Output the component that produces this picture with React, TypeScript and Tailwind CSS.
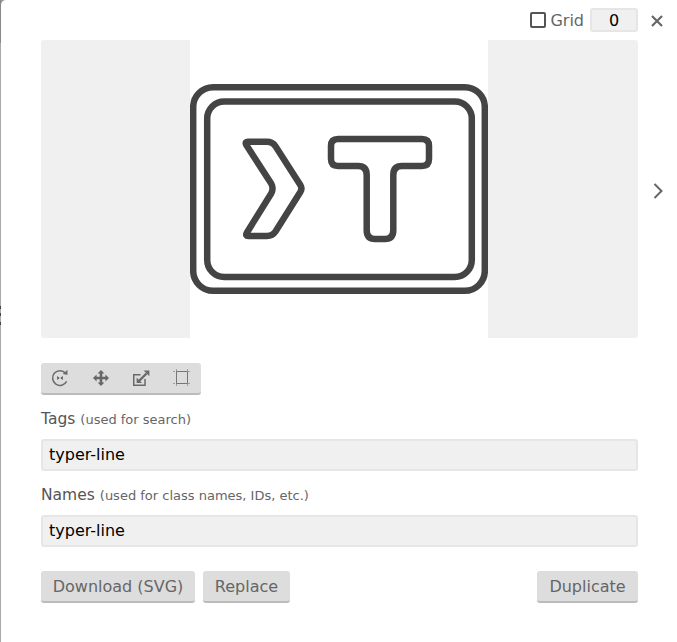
const RotateIcon = () => (
  <svg width="20" height="20" viewBox="0 0 20 20" fill="none" stroke="#6a6a6a" strokeWidth="1.5" className="-translate-x-px">
    <path d="M15.6 5.2 A7.4 7.4 0 1 0 16.6 13.4" />
    <path d="M13.2 5.8 L17.2 6.6 L17.2 2.4 Z" fill="#6a6a6a" strokeWidth="0.5" />
    <path d="M7.2 8 V12 L9.6 10 Z M12.8 8 V12 L10.4 10 Z" fill="#555" stroke="none" />
  </svg>
);

const MoveIcon = () => (
  <svg width="18" height="18" viewBox="0 0 18 18" fill="#666">
    <path d="M9 1 L12.4 4.6 H10.3 V7.7 H13.4 V5.6 L17 9 L13.4 12.4 V10.3 H10.3 V13.4 H12.4 L9 17 L5.6 13.4 H7.7 V10.3 H4.6 V12.4 L1 9 L4.6 5.6 V7.7 H7.7 V4.6 H5.6 Z" />
  </svg>
);

const ResizeIcon = () => (
  <svg width="20" height="20" viewBox="0 0 20 20" fill="none" stroke="#6a6a6a">
    <path d="M2.75 6.75 H9.5 M2.75 6 V17.25 H14 V11" strokeWidth="1.5" />
    <path d="M8 13 L15.5 5.5" strokeWidth="2.4" />
    <path d="M12.6 2.4 H18.4 V8.2 Z" fill="#6a6a6a" stroke="none" />
    <path d="M5.6 9.5 V15 H11 Z" fill="#6a6a6a" stroke="none" />
  </svg>
);

const CropIcon = () => (
  <svg width="20" height="20" viewBox="0 0 20 20" fill="none" stroke="#777" strokeWidth="1">
    <path d="M5.5 3.5 H16.5 V15.5 H5.5 Z" />
    <path d="M5.5 1 V18 M16.5 1 V18 M2 3.5 H20 M2 15.5 H20" strokeDasharray="2 1" strokeOpacity="0.6" />
  </svg>
);

const TyperGlyph = () => (
  <svg width="298" height="298" viewBox="190 40 298 298" fill="none" stroke="#444" strokeWidth="6.5" strokeLinejoin="round" className="block">
    <rect x="193.2" y="87.2" width="291.6" height="203.6" rx="20" />
    <rect x="207.2" y="101.5" width="264.6" height="175.5" rx="17" />
    <path d="M248 141.7 H267 Q272.5 141.7 275.5 146.2 L300.5 185.3 Q302.4 188.5 300.5 191.7 L275.5 231.5 Q272.5 236 267 236 H248.5 Q245 236 246.8 232.8 L271.2 193.5 Q273.9 188.5 271.2 183.5 L246.3 145 Q244.6 141.7 248 141.7 Z" />
    <path d="M338 139 H422 Q429 139 429 146 V159 Q429 166 422 166 H402 Q393.3 166 393.3 175 V230 Q393.3 239 385 239 H375 Q366.7 239 366.7 230 V175 Q366.7 166 358 166 H338 Q331 166 331 159 V146 Q331 139 338 139 Z" />
  </svg>
);

const fieldClass =
  'h-8 w-full rounded-[3px] border-2 border-[#e6e6e6] bg-[#f0f0f0] px-1.5 pb-0.5 text-[16px] text-black outline-none';
const buttonClass =
  'h-8 rounded-[3px] border-b-2 border-[#bbb] bg-[#ddd] pt-0.5 text-[16px] text-[#666]';

const toolIcons = [RotateIcon, MoveIcon, ResizeIcon, CropIcon];

const App = () => {
  return (
    <div className="flex h-[642px] w-[677px] overflow-hidden bg-[#999] font-['DejaVu_Sans',sans-serif]">
      {/* sliver of the page behind the dialog */}
      <div className="flex w-px shrink-0 flex-col">
        <div className="h-[43px] bg-[#888]" />
        <div className="h-[263px] bg-[#aaa]" />
        <div className="h-[3px] bg-[#444]" />
        <div className="h-1 bg-[#aaa]" />
        <div className="h-[3px] bg-[#444]" />
        <div className="h-[6px] bg-[#aaa]" />
        <div className="h-[3px] bg-[#444]" />
        <div className="flex-1 bg-[#aaa]" />
      </div>
      <div className="h-full w-full overflow-hidden rounded-tl-[5px] bg-white pl-10">
        <div className="flex h-10 w-[635px] items-center">
          <div className="flex w-[597px] shrink-0 items-center justify-end">
            <span className="mr-1 size-4 rounded-[2px] border-2 border-[#555]" />
            <span className="mr-1.5 pt-0.5 text-[16px] text-[#666]">Grid</span>
            <input
              readOnly
              value="0"
              className="h-6 w-12 rounded-[3px] border-2 border-[#e6e6e6] bg-[#f0f0f0] pt-0.5 text-center text-[16px] text-black outline-none"
            />
          </div>
          <div className="flex flex-1 justify-center pt-[2px]">
            <svg width="14" height="14" viewBox="0 0 14 14" fill="none" stroke="#666" strokeWidth="2.2">
              <path d="M2 2 L12 12 M12 2 L2 12" />
            </svg>
          </div>
        </div>
        <div className="flex w-[635px] items-center">
          <div className="flex h-[298px] w-[597px] shrink-0 rounded-[3px] bg-[#f0f0f0] pl-[149px]">
            <div className="bg-white">
              <TyperGlyph />
            </div>
          </div>
          <div className="flex flex-1 justify-center pt-[3px]">
            <svg width="12" height="18" viewBox="0 0 12 18" fill="none" stroke="#666" strokeWidth="2" className="translate-x-[1px]">
              <path d="M2.5 2 L9.5 9 L2.5 16" />
            </svg>
          </div>
        </div>
        <div className="mt-[25px] flex h-8 w-40 rounded-[3px] border-b-2 border-[#bbb] bg-[#ddd]">
          {toolIcons.map((Icon, i) => (
            <div key={i} className="flex h-full w-10 items-center justify-center">
              <Icon />
            </div>
          ))}
        </div>
        <div className="w-[597px]">
          <div className="mt-3 flex h-6 items-baseline gap-[5px] text-[15.5px] leading-6 text-[#555]">
            Tags <span className="text-[13px] text-[#666]">(used for search)</span>
          </div>
          <input readOnly value="typer-line" className={`${fieldClass} mt-2`} />
          <div className="mt-3 flex h-6 items-baseline gap-[5px] text-[15.5px] leading-6 text-[#555]">
            Names <span className="text-[13px] text-[#666]">(used for class names, IDs, etc.)</span>
          </div>
          <input readOnly value="typer-line" className={`${fieldClass} mt-2`} />
          <div className="mt-6 flex items-center">
            <button className={`${buttonClass} w-[154px]`}>Download (SVG)</button>
            <button className={`${buttonClass} ml-2 w-[87px]`}>Replace</button>
            <button className={`${buttonClass} ml-auto w-[101px]`}>Duplicate</button>
          </div>
        </div>
      </div>
    </div>
  );
};

export default App;
